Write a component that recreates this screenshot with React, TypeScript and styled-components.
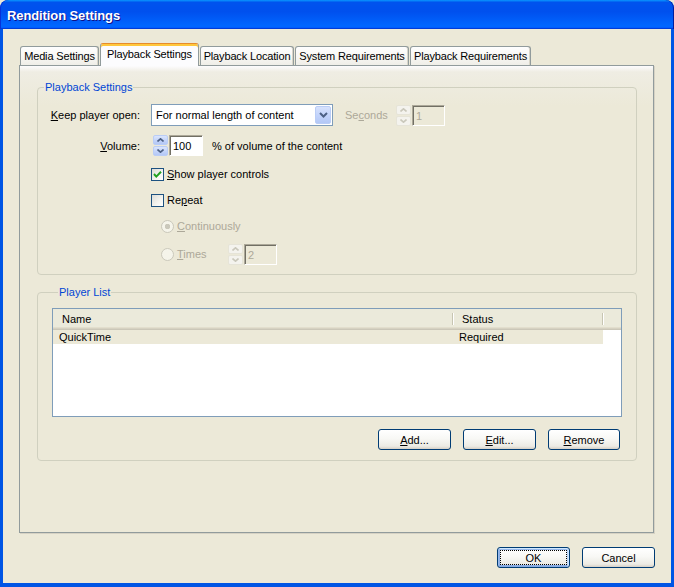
import styled, { createGlobalStyle } from "styled-components";

const GlobalStyle = createGlobalStyle`
  html, body {
    margin: 0;
    padding: 0;
    background: #ece9d8;
  }
  body {
    font-family: "Liberation Sans", Arial, sans-serif;
    font-size: 11px;
    color: #000;
  }
  * {
    box-sizing: border-box;
  }
`;

const tabs = [
  { label: "Media Settings", w: 79 },
  { label: "Playback Settings", w: 99, active: true },
  { label: "Playback Location", w: 94 },
  { label: "System Requirements", w: 114 },
  { label: "Playback Requirements", w: 121 },
];

const Chevron = ({ dir, color }: { dir: "up" | "down"; color: string }) => (
  <svg width="7" height="4" viewBox="0 0 7 4">
    <polyline
      points={dir === "up" ? "0.5,3.5 3.5,0.8 6.5,3.5" : "0.5,0.5 3.5,3.2 6.5,0.5"}
      fill="none"
      stroke={color}
      strokeWidth="1.6"
    />
  </svg>
);

const Spinner = ({ disabled, ml }: { disabled?: boolean; ml: number }) => (
  <SpinBox $ml={ml}>
    <SpinHalf $disabled={disabled}>
      <Chevron dir="up" color={disabled ? "#cac8bb" : "#4d6185"} />
    </SpinHalf>
    <SpinHalf $disabled={disabled}>
      <Chevron dir="down" color={disabled ? "#cac8bb" : "#4d6185"} />
    </SpinHalf>
  </SpinBox>
);

const CheckBox = ({ checked }: { checked?: boolean }) => (
  <CheckFrame>
    {checked && (
      <svg width="11" height="11" viewBox="0 0 11 11">
        <polyline
          points="2,5 4.3,7.6 9,2.8"
          fill="none"
          stroke="#21a121"
          strokeWidth="2"
        />
      </svg>
    )}
  </CheckFrame>
);

export default function App() {
  return (
    <>
      <GlobalStyle />
      <Window>
        <TitleBar>
          <Title>Rendition Settings</Title>
        </TitleBar>
        <Body>
          <TabStrip>
            {tabs.map((t) => (
              <Tab key={t.label} $active={!!t.active} $w={t.w}>
                {t.label}
              </Tab>
            ))}
          </TabStrip>
          <Panel>
            <SettingsGroup>
              <Legend>Playback Settings</Legend>
              <Row $h={22}>
                <FieldLabel>
                  <u>K</u>eep player open:
                </FieldLabel>
                <Combo>
                  <ComboText>For normal length of content</ComboText>
                  <ComboButton>
                    <svg width="9" height="6" viewBox="0 0 9 6">
                      <polyline
                        points="1,1 4.5,4.5 8,1"
                        fill="none"
                        stroke="#4d6185"
                        strokeWidth="2"
                      />
                    </svg>
                  </ComboButton>
                </Combo>
                <Caption $disabled $ml={12} $w={40}>
                  Se<u>c</u>onds
                </Caption>
                <Spinner disabled ml={11} />
                <TextBox $disabled $w={33}>
                  1
                </TextBox>
              </Row>
              <Row $h={21} $mt={9}>
                <FieldLabel>
                  <u>V</u>olume:
                </FieldLabel>
                <Spinner ml={2} />
                <TextBox $w={34}>100</TextBox>
                <Caption $ml={9}>% of volume of the content</Caption>
              </Row>
              <Row $h={20} $mt={8} $indent={151}>
                <CheckBox checked />
                <Caption $ml={3}>
                  <u>S</u>how player controls
                </Caption>
              </Row>
              <Row $h={20} $mt={6} $indent={151}>
                <CheckBox />
                <Caption $ml={3}>
                  Re<u>p</u>eat
                </Caption>
              </Row>
              <Row $h={20} $mt={6} $indent={161}>
                <Radio $selected />
                <Caption $disabled $ml={3}>
                  <u>C</u>ontinuously
                </Caption>
              </Row>
              <Row $h={20} $mt={8} $indent={161}>
                <Radio />
                <Caption $disabled $ml={3} $w={51}>
                  <u>T</u>imes
                </Caption>
                <Spinner disabled ml={0} />
                <TextBox $disabled $w={33}>
                  2
                </TextBox>
              </Row>
            </SettingsGroup>

            <PlayerGroup>
              <Legend>Player List</Legend>
              <ListView>
                <ListHeader>
                  <HeaderCell $w={400}>Name</HeaderCell>
                  <HeaderCell $w={150}>Status</HeaderCell>
                </ListHeader>
                <ListRow>
                  <ListCell $w={400} $pl={6}>
                    QuickTime
                  </ListCell>
                  <ListCell $w={150} $pl={6}>
                    Required
                  </ListCell>
                </ListRow>
              </ListView>
              <ButtonRow>
                <Button $w={73}>
                  <u>A</u>dd...
                </Button>
                <Button $w={73}>
                  <u>E</u>dit...
                </Button>
                <Button $w={72}>
                  <u>R</u>emove
                </Button>
              </ButtonRow>
            </PlayerGroup>
          </Panel>
          <Footer>
            <Button $w={73} $default>
              OK
            </Button>
            <Button $w={73}>Cancel</Button>
          </Footer>
        </Body>
      </Window>
    </>
  );
}

const Window = styled.div`
  width: 674px;
  height: 587px;
  display: flex;
  flex-direction: column;
  overflow: hidden;
  border-radius: 8px 8px 0 0;
  background: #0054e3;
`;

const TitleBar = styled.div`
  height: 29px;
  flex: none;
  display: flex;
  align-items: center;
  padding: 2px 0 0 7px;
  border-radius: 8px 8px 0 0;
  background: linear-gradient(
    180deg,
    #0997ff 0%,
    #0053ee 8%,
    #0050ee 40%,
    #0066ff 88%,
    #0066ff 93%,
    #005bff 95%,
    #003dd7 96%,
    #003dd7 100%
  );
  box-shadow: inset 1px 0 #0831d9, inset -1px 0 #001ea0;
`;

const Title = styled.span`
  color: #fff;
  font-family: "Liberation Sans", Arial, sans-serif;
  font-weight: bold;
  font-size: 13px;
  letter-spacing: -0.1px;
  text-shadow: 1px 1px #0f1089;
`;

const Body = styled.div`
  flex: 1;
  display: flex;
  flex-direction: column;
  background: #ece9d8;
  border-style: solid;
  border-color: #0055e5;
  border-width: 0 3px 4px 3px;
  padding: 14px 17px 15px 16px;
`;

const TabStrip = styled.div`
  display: flex;
  align-items: flex-end;
  gap: 1px;
  height: 23px;
  margin-bottom: -1px;
  padding-left: 1px;
  position: relative;
  z-index: 1;
`;

const Tab = styled.div<{ $active: boolean; $w: number }>`
  width: ${({ $w }) => $w}px;
  height: ${({ $active }) => ($active ? 23 : 19)}px;
  margin-bottom: ${({ $active }) => ($active ? 0 : 1)}px;
  display: flex;
  align-items: center;
  justify-content: center;
  padding-bottom: ${({ $active }) => ($active ? 2 : 0)}px;
  white-space: nowrap;
  letter-spacing: -0.15px;
  border: 1px solid #919b9c;
  border-bottom: none;
  border-radius: 3px 3px 0 0;
  background: ${({ $active }) =>
    $active
      ? "#fcfcfe"
      : "linear-gradient(180deg, #fefefe 0%, #f9f8f5 45%, #efeee8 100%)"};
  border-top-color: ${({ $active }) => ($active ? "#e68b2c" : "#919b9c")};
  box-shadow: ${({ $active }) =>
    $active ? "inset 0 2px #ffc73c" : "inset -1px 0 #d8d5c8"};
`;

const Panel = styled.div`
  height: 468px;
  flex: none;
  display: flex;
  flex-direction: column;
  padding: 15px 16px 0 17px;
  border: 1px solid #919b9c;
  background: linear-gradient(180deg, #fcfcfe 0px, #efede3 6px, #ece9d8 40px);
  box-shadow: 1px 1px 0 #d6d2c4;
`;

const Group = styled.fieldset`
  margin: 0;
  min-width: 0;
  border: 1px solid #d0d0bf;
  border-radius: 4px;
`;

const SettingsGroup = styled(Group)`
  padding: 10px 0 10px 0;
`;

const PlayerGroup = styled(Group)`
  margin-top: 11px;
  padding: 9px 14px 10px 14px;
`;

const Legend = styled.legend`
  margin-left: 6px;
  padding: 0 1px;
  line-height: 13px;
  color: #0046d5;
`;

const Row = styled.div<{ $h: number; $mt?: number; $indent?: number }>`
  display: flex;
  align-items: center;
  height: ${({ $h }) => $h}px;
  margin-top: ${({ $mt }) => $mt ?? 0}px;
  padding-left: ${({ $indent }) => ($indent ? $indent - 38 : 0)}px;
`;

const FieldLabel = styled.span`
  width: 102px;
  margin-right: 11px;
  text-align: right;
  white-space: nowrap;
`;

const Caption = styled.span<{ $disabled?: boolean; $ml?: number; $w?: number }>`
  margin-left: ${({ $ml }) => $ml ?? 0}px;
  width: ${({ $w }) => ($w ? `${$w}px` : "auto")};
  color: ${({ $disabled }) => ($disabled ? "#aca899" : "#000")};
  white-space: nowrap;
`;

const Combo = styled.div`
  width: 182px;
  height: 22px;
  display: flex;
  align-items: center;
  justify-content: space-between;
  border: 1px solid #7f9db9;
  background: #fff;
`;

const ComboText = styled.span`
  padding-left: 4px;
`;

const ComboButton = styled.div`
  width: 16px;
  height: 18px;
  margin-right: 1px;
  display: flex;
  align-items: center;
  justify-content: center;
  border: 1px solid #bacdf6;
  border-radius: 2px;
  background: linear-gradient(180deg, #d7e2fc 0%, #c3d4fb 50%, #b3c8f6 100%);
`;

const SpinBox = styled.div<{ $ml: number }>`
  width: 15px;
  height: 21px;
  flex: none;
  margin-left: ${({ $ml }) => $ml}px;
  display: flex;
  flex-direction: column;
  gap: 1px;
`;

const SpinHalf = styled.div<{ $disabled?: boolean }>`
  flex: 1;
  display: flex;
  align-items: center;
  justify-content: center;
  border-radius: 2px;
  border: 1px solid ${({ $disabled }) => ($disabled ? "#e6e4d8" : "#bacdf6")};
  background: ${({ $disabled }) =>
    $disabled
      ? "#f4f3ee"
      : "linear-gradient(180deg, #dbe5fc 0%, #c5d5fa 50%, #b4c8f6 100%)"};
`;

const TextBox = styled.div<{ $disabled?: boolean; $w: number }>`
  width: ${({ $w }) => $w}px;
  height: 21px;
  flex: none;
  margin-left: 1px;
  padding: 1px 0 0 3px;
  display: flex;
  align-items: center;
  border: 1px solid;
  border-color: #aca899 #fff #fff #aca899;
  box-shadow: inset 1px 1px #716f64;
  background: ${({ $disabled }) => ($disabled ? "#ece9d8" : "#fff")};
  color: ${({ $disabled }) => ($disabled ? "#aca899" : "#000")};
`;

const CheckFrame = styled.div`
  width: 13px;
  height: 13px;
  flex: none;
  display: flex;
  align-items: center;
  justify-content: center;
  border: 1px solid #1c5180;
  background: linear-gradient(135deg, #dcdcd7 0%, #f4f4f0 60%, #fff 100%);
`;

const Radio = styled.div<{ $selected?: boolean }>`
  width: 13px;
  height: 13px;
  flex: none;
  border-radius: 50%;
  border: 1px solid #cac8bb;
  background: ${({ $selected }) =>
    $selected
      ? "radial-gradient(circle, #cac8bb 0 2.5px, #f5f4ea 3px)"
      : "#f5f4ea"};
`;

const ListView = styled.div`
  height: 109px;
  border: 1px solid #7f9db9;
  background: #fff;
  display: flex;
  flex-direction: column;
`;

const ListHeader = styled.div`
  height: 21px;
  flex: none;
  display: flex;
  background: #ebeadb;
  box-shadow: inset 0 -1px #cbc7b8, inset 0 -2px #d6d2c2, inset 0 -3px #e2decd;
`;

const HeaderCell = styled.div<{ $w: number }>`
  width: ${({ $w }) => $w}px;
  position: relative;
  display: flex;
  align-items: center;
  padding: 0 0 2px 9px;

  &::after {
    content: "";
    position: absolute;
    right: 0;
    top: 4px;
    bottom: 5px;
    width: 1px;
    background: #c7c5b2;
    box-shadow: 1px 0 #fff;
  }
`;

const ListRow = styled.div`
  width: 550px;
  height: 14px;
  display: flex;
  align-items: center;
  background: #ece9d8;
`;

const ListCell = styled.span<{ $w: number; $pl: number }>`
  width: ${({ $w }) => $w}px;
  padding-left: ${({ $pl }) => $pl}px;
`;

const ButtonRow = styled.div`
  display: flex;
  justify-content: flex-end;
  gap: 12px;
  margin-top: 12px;
  padding-right: 2px;
`;

const Button = styled.div<{ $w: number; $default?: boolean }>`
  width: ${({ $w }) => $w}px;
  height: 21px;
  display: flex;
  align-items: center;
  justify-content: center;
  border: 1px solid #003c74;
  border-radius: 3px;
  background: linear-gradient(180deg, #fff 0%, #f8f8f5 45%, #ecebe4 85%, #d6d0c5 100%);
  box-shadow: ${({ $default }) =>
    $default
      ? "inset -1px 1px #cee7ff, inset 1px 2px #98b8ea, inset -2px 2px #bcd4f6, inset 1px -1px #89ade4, inset 2px -2px #89ade4"
      : "none"};
  outline: ${({ $default }) => ($default ? "1px dotted #000" : "none")};
  outline-offset: -4px;
`;

const Footer = styled.div`
  display: flex;
  justify-content: flex-end;
  gap: 12px;
  margin-top: 14px;
  margin-right: -1px;
`;
